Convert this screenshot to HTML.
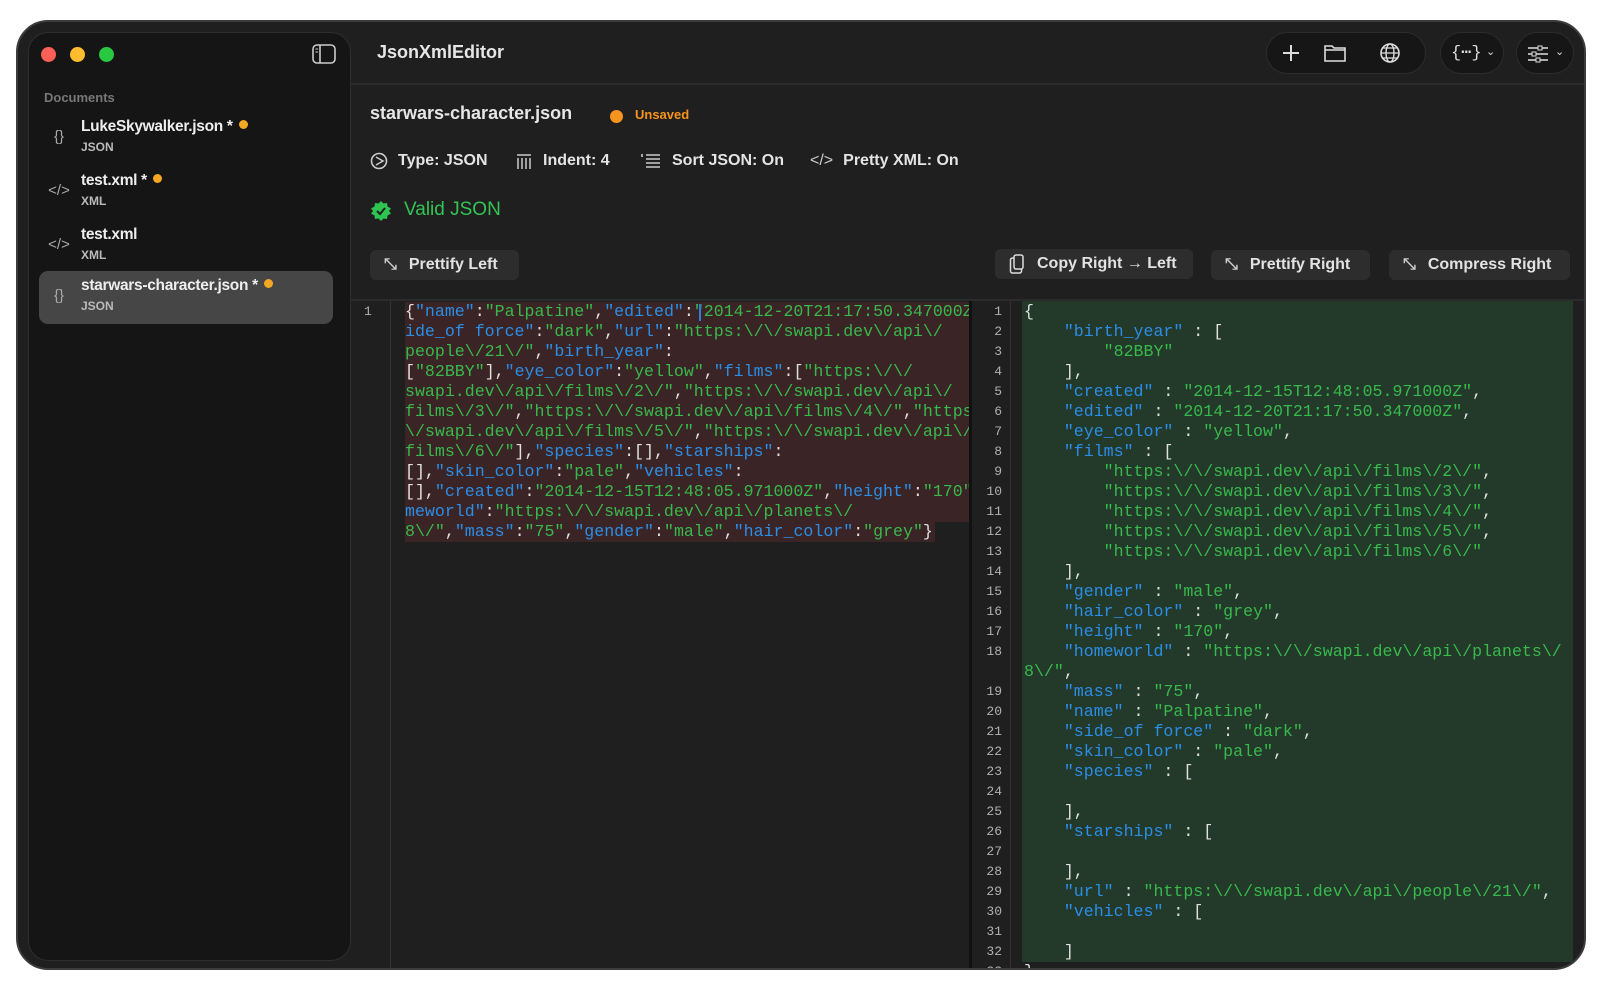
<!DOCTYPE html>
<html><head><meta charset="utf-8"><style>
*{margin:0;padding:0;box-sizing:border-box}
body{width:1600px;height:1000px;background:#fff;font-family:"Liberation Sans",sans-serif;overflow:hidden;position:relative}
.win{position:absolute;left:16px;top:20px;width:1570px;height:950px;background:#1f1f1f;border-radius:32px;border:2px solid #3c3c3c;overflow:hidden}
.side{position:absolute;left:10px;top:10px;width:323px;height:929px;background:#151515;border:1px solid #2e2e2e;border-radius:20px}
.abs{position:absolute}
.dot{position:absolute;width:15px;height:15px;border-radius:50%;top:14px}
.t{color:#e6e6e6}
.doc{position:absolute;left:10px;width:294px;height:53px;border-radius:9px}
.doc .ic{position:absolute;left:8px;top:16px;color:#aaa;font-size:15px;width:24px;text-align:center}
.doc .n{position:absolute;left:42px;top:6px;color:#eee;font-size:15.5px;font-weight:bold;letter-spacing:-0.3px}
.doc .s{position:absolute;left:42px;top:28px;color:#bbb;font-size:12px;font-weight:bold}
.od{display:inline-block;width:9px;height:9px;border-radius:50%;background:#f5a623;margin-left:6px;vertical-align:2px}
.opt{position:absolute;top:130px;color:#e4e4e4;font-size:16px;font-weight:bold;display:flex;align-items:center;gap:10px}
.btn{position:absolute;top:228px;height:30px;background:#2d2d2d;border-radius:6px;color:#e2e2e2;font-size:16px;font-weight:bold;display:flex;align-items:center;padding-left:14px;gap:12px}
.pill{position:absolute;top:10px;height:42px;background:#161616;border:1px solid #2c2c2c;border-radius:21px}
.code{font-family:"Liberation Mono",monospace;font-size:16.6px;line-height:20px;white-space:pre}
.k{color:#2b8ee6}.s1{color:#38b94c}.p{color:#e0e0e0}
.ln{position:absolute;font-family:"Liberation Mono",monospace;font-size:13px;line-height:20px;color:#b0b0b0;white-space:pre}
</style></head><body>
<div class="win">
 <div class="side">
  <div class="dot" style="left:12px;background:#fe5f57"></div>
  <div class="dot" style="left:41px;background:#febc2e"></div>
  <div class="dot" style="left:70px;background:#28c840"></div>
  <svg class="abs" style="left:283px;top:11px" width="24" height="20" viewBox="0 0 24 20"><rect x="1" y="1" width="22" height="18" rx="4" fill="none" stroke="#ccc" stroke-width="1.6"/><line x1="8" y1="1" x2="8" y2="19" stroke="#ccc" stroke-width="1.6"/><line x1="3.5" y1="5" x2="6" y2="5" stroke="#ccc"/><line x1="3.5" y1="8" x2="6" y2="8" stroke="#ccc"/></svg>
  <div class="abs" style="left:15px;top:57px;color:#777;font-size:13px;font-weight:bold">Documents</div>
  <div class="doc" style="top:79px"><div class="ic">{}</div><div class="n">LukeSkywalker.json *<span class="od"></span></div><div class="s">JSON</div></div>
  <div class="doc" style="top:133px"><div class="ic">&lt;/&gt;</div><div class="n">test.xml *<span class="od"></span></div><div class="s">XML</div></div>
  <div class="doc" style="top:187px"><div class="ic">&lt;/&gt;</div><div class="n">test.xml</div><div class="s">XML</div></div>
  <div class="doc" style="top:238px;background:#464646"><div class="ic">{}</div><div class="n">starwars-character.json *<span class="od"></span></div><div class="s">JSON</div></div>
 </div>
 <div class="abs t" style="left:359px;top:20px;font-size:18px;font-weight:bold">JsonXmlEditor</div>
 <div class="pill" style="left:1248px;width:160px">
  <svg class="abs" style="left:14px;top:10px" width="20" height="20"><path d="M10 2V18M2 10H18" stroke="#ddd" stroke-width="2"/></svg>
  <svg class="abs" style="left:56px;top:10px" width="24" height="20"><path d="M2 3H9L11 5H22V18H2Z" fill="none" stroke="#ddd" stroke-width="1.6"/><path d="M2 7H22" stroke="#ddd" stroke-width="1.4"/></svg>
  <svg class="abs" style="left:112px;top:9px" width="22" height="22" viewBox="0 0 22 22"><circle cx="11" cy="11" r="9" fill="none" stroke="#ddd" stroke-width="1.6"/><ellipse cx="11" cy="11" rx="4" ry="9" fill="none" stroke="#ddd" stroke-width="1.4"/><path d="M2 11H20M4 6H18M4 16H18" stroke="#ddd" stroke-width="1.2"/></svg>
 </div>
 <div class="pill" style="left:1422px;width:64px"><span class="abs" style="left:10px;top:9px;color:#ddd;font-size:17px;font-family:'Liberation Mono',monospace">{⋯}</span><span class="abs" style="left:45px;top:12px;color:#ddd;font-size:11px">⌄</span></div>
 <div class="pill" style="left:1498px;width:58px"><svg class="abs" style="left:10px;top:11px" width="22" height="20"><path d="M1 4H21M1 10H21M1 16H21" stroke="#ddd" stroke-width="1.5"/><rect x="11" y="2" width="4" height="4" fill="#161616" stroke="#ddd"/><rect x="5" y="8" width="4" height="4" fill="#161616" stroke="#ddd"/><rect x="9" y="14" width="4" height="4" fill="#161616" stroke="#ddd"/></svg><span class="abs" style="left:38px;top:12px;color:#ddd;font-size:11px">⌄</span></div>
 <div class="abs" style="left:333px;top:61px;width:1240px;height:2px;background:#2b2b2b"></div>
 <div class="abs t" style="left:352px;top:81px;font-size:18px;font-weight:bold">starwars-character.json</div>
 <div class="abs" style="left:592px;top:88px;width:13px;height:13px;border-radius:50%;background:#f7941d"></div>
 <div class="abs" style="left:617px;top:85px;color:#f7941d;font-size:13px;font-weight:bold">Unsaved</div>
 <div class="opt" style="left:352px"><svg width="18" height="18"><circle cx="9" cy="9" r="7.5" fill="none" stroke="#ccc" stroke-width="1.6"/><path d="M6 5L13 9L6 13" fill="none" stroke="#ccc" stroke-width="1.5"/></svg>Type: JSON</div>
 <div class="opt" style="left:497px"><svg width="18" height="18"><path d="M2 3H16M3 6V17M7 6V17M11 6V17M15 6V17" stroke="#ccc" stroke-width="1.5"/></svg>Indent: 4</div>
 <div class="opt" style="left:622px"><svg width="22" height="18"><path d="M2 2V5M6 3H20M6 7H20M6 11H20M6 15H20" stroke="#ccc" stroke-width="1.6"/></svg>Sort JSON: On</div>
 <div class="opt" style="left:792px"><span style="color:#ccc;font-size:16px;font-weight:normal">&lt;/&gt;</span>Pretty XML: On</div>
 <svg class="abs" style="left:352px;top:178px" width="22" height="22" viewBox="0 0 22 22"><path d="M11 1L13.5 3.5L17 3L17.5 6.5L21 8.5L19 11L21 13.5L17.5 15.5L17 19L13.5 18.5L11 21L8.5 18.5L5 19L4.5 15.5L1 13.5L3 11L1 8.5L4.5 6.5L5 3L8.5 3.5Z" fill="#2fc352"/><path d="M7 11L10 14L15 8" fill="none" stroke="#1f1f1f" stroke-width="2"/></svg>
 <div class="abs" style="left:386px;top:177px;color:#33c454;font-size:19px">Valid JSON</div>
 <div class="btn" style="left:352px;width:149px"><span style="color:#ccc">⤡</span>Prettify Left</div>
 <div class="btn" style="left:977px;width:198px;top:227px"><svg width="16" height="20"><rect x="1.5" y="4" width="11" height="15" rx="2" fill="none" stroke="#ddd" stroke-width="1.5"/><rect x="5" y="1" width="9" height="14" rx="2" fill="#2d2d2d" stroke="#ddd" stroke-width="1.5"/></svg>Copy Right → Left</div>
 <div class="btn" style="left:1193px;width:159px"><span style="color:#ccc">⤡</span>Prettify Right</div>
 <div class="btn" style="left:1371px;width:181px"><span style="color:#ccc">⤡</span>Compress Right</div>
 <div class="abs" style="left:333px;top:277px;width:1240px;height:2px;background:#2b2b2b"></div>
 <!-- left editor -->
 <div class="abs" style="left:372px;top:279px;width:1px;height:680px;background:#333"></div>
 <div class="ln" style="left:346px;top:280px">1</div>
 <div class="abs" style="left:387px;top:280px;width:564px;height:240px;background:#3b2425"></div>
 <div class="abs" style="left:387px;top:500px;width:564px;height:40px;background:#1f1f1f"></div>
 <div class="abs" style="left:387px;top:500px;width:530px;height:20px;background:#3b2425"></div>
 <div class="abs code" style="left:387px;top:280px;width:564px;overflow:hidden"><span class="p">{</span><span class="k">"name"</span><span class="p">:</span><span class="s1">"Palpatine"</span><span class="p">,</span><span class="k">"edited"</span><span class="p">:</span><span class="s1">"2014-12-20T21:17:50.347000Z"</span>
<span class="k">ide_of force"</span><span class="p">:</span><span class="s1">"dark"</span><span class="p">,</span><span class="k">"url"</span><span class="p">:</span><span class="s1">"https:\/\/swapi.dev\/api\/</span>
<span class="s1">people\/21\/"</span><span class="p">,</span><span class="k">"birth_year"</span><span class="p">:</span>
<span class="p">[</span><span class="s1">"82BBY"</span><span class="p">],</span><span class="k">"eye_color"</span><span class="p">:</span><span class="s1">"yellow"</span><span class="p">,</span><span class="k">"films"</span><span class="p">:[</span><span class="s1">"https:\/\/</span>
<span class="s1">swapi.dev\/api\/films\/2\/"</span><span class="p">,</span><span class="s1">"https:\/\/swapi.dev\/api\/</span>
<span class="s1">films\/3\/"</span><span class="p">,</span><span class="s1">"https:\/\/swapi.dev\/api\/films\/4\/"</span><span class="p">,</span><span class="s1">"https:\/</span>
<span class="s1">\/swapi.dev\/api\/films\/5\/"</span><span class="p">,</span><span class="s1">"https:\/\/swapi.dev\/api\/</span>
<span class="s1">films\/6\/"</span><span class="p">],</span><span class="k">"species"</span><span class="p">:[],</span><span class="k">"starships"</span><span class="p">:</span>
<span class="p">[],</span><span class="k">"skin_color"</span><span class="p">:</span><span class="s1">"pale"</span><span class="p">,</span><span class="k">"vehicles"</span><span class="p">:</span>
<span class="p">[],</span><span class="k">"created"</span><span class="p">:</span><span class="s1">"2014-12-15T12:48:05.971000Z"</span><span class="p">,</span><span class="k">"height"</span><span class="p">:</span><span class="s1">"170"</span>
<span class="k">meworld"</span><span class="p">:</span><span class="s1">"https:\/\/swapi.dev\/api\/planets\/</span>
<span class="s1">8\/"</span><span class="p">,</span><span class="k">"mass"</span><span class="p">:</span><span class="s1">"75"</span><span class="p">,</span><span class="k">"gender"</span><span class="p">:</span><span class="s1">"male"</span><span class="p">,</span><span class="k">"hair_color"</span><span class="p">:</span><span class="s1">"grey"</span><span class="p">}</span></div>
 <div class="abs" style="left:681px;top:282px;width:2px;height:17px;background:#2b7fe0"></div>
 <!-- divider -->
 <div class="abs" style="left:951px;top:279px;width:3px;height:680px;background:#111"></div>
 <!-- right editor -->
 <div class="abs" style="left:992px;top:279px;width:1px;height:680px;background:#333"></div>
 <div class="ln" style="left:958px;top:280px;width:26px;text-align:right">1
2
3
4
5
6
7
8
9
10
11
12
13
14
15
16
17
18

19
20
21
22
23
24
25
26
27
28
29
30
31
32
33</div>
 <div class="abs" style="left:1004px;top:279px;width:551px;height:661px;background:#23392a"></div>
 <div class="abs code" style="left:1006px;top:280px"><span class="p">{</span>
    <span class="k">"birth_year"</span><span class="p"> : [</span>
        <span class="s1">"82BBY"</span>
<span class="p">    ],</span>
    <span class="k">"created"</span><span class="p"> : </span><span class="s1">"2014-12-15T12:48:05.971000Z"</span><span class="p">,</span>
    <span class="k">"edited"</span><span class="p"> : </span><span class="s1">"2014-12-20T21:17:50.347000Z"</span><span class="p">,</span>
    <span class="k">"eye_color"</span><span class="p"> : </span><span class="s1">"yellow"</span><span class="p">,</span>
    <span class="k">"films"</span><span class="p"> : [</span>
        <span class="s1">"https:\/\/swapi.dev\/api\/films\/2\/"</span><span class="p">,</span>
        <span class="s1">"https:\/\/swapi.dev\/api\/films\/3\/"</span><span class="p">,</span>
        <span class="s1">"https:\/\/swapi.dev\/api\/films\/4\/"</span><span class="p">,</span>
        <span class="s1">"https:\/\/swapi.dev\/api\/films\/5\/"</span><span class="p">,</span>
        <span class="s1">"https:\/\/swapi.dev\/api\/films\/6\/"</span>
<span class="p">    ],</span>
    <span class="k">"gender"</span><span class="p"> : </span><span class="s1">"male"</span><span class="p">,</span>
    <span class="k">"hair_color"</span><span class="p"> : </span><span class="s1">"grey"</span><span class="p">,</span>
    <span class="k">"height"</span><span class="p"> : </span><span class="s1">"170"</span><span class="p">,</span>
    <span class="k">"homeworld"</span><span class="p"> : </span><span class="s1">"https:\/\/swapi.dev\/api\/planets\/</span>
<span class="s1">8\/"</span><span class="p">,</span>
    <span class="k">"mass"</span><span class="p"> : </span><span class="s1">"75"</span><span class="p">,</span>
    <span class="k">"name"</span><span class="p"> : </span><span class="s1">"Palpatine"</span><span class="p">,</span>
    <span class="k">"side_of force"</span><span class="p"> : </span><span class="s1">"dark"</span><span class="p">,</span>
    <span class="k">"skin_color"</span><span class="p"> : </span><span class="s1">"pale"</span><span class="p">,</span>
    <span class="k">"species"</span><span class="p"> : [</span>

<span class="p">    ],</span>
    <span class="k">"starships"</span><span class="p"> : [</span>

<span class="p">    ],</span>
    <span class="k">"url"</span><span class="p"> : </span><span class="s1">"https:\/\/swapi.dev\/api\/people\/21\/"</span><span class="p">,</span>
    <span class="k">"vehicles"</span><span class="p"> : [</span>

<span class="p">    ]</span>
<span class="p">}</span></div>
</div>
</body></html>
